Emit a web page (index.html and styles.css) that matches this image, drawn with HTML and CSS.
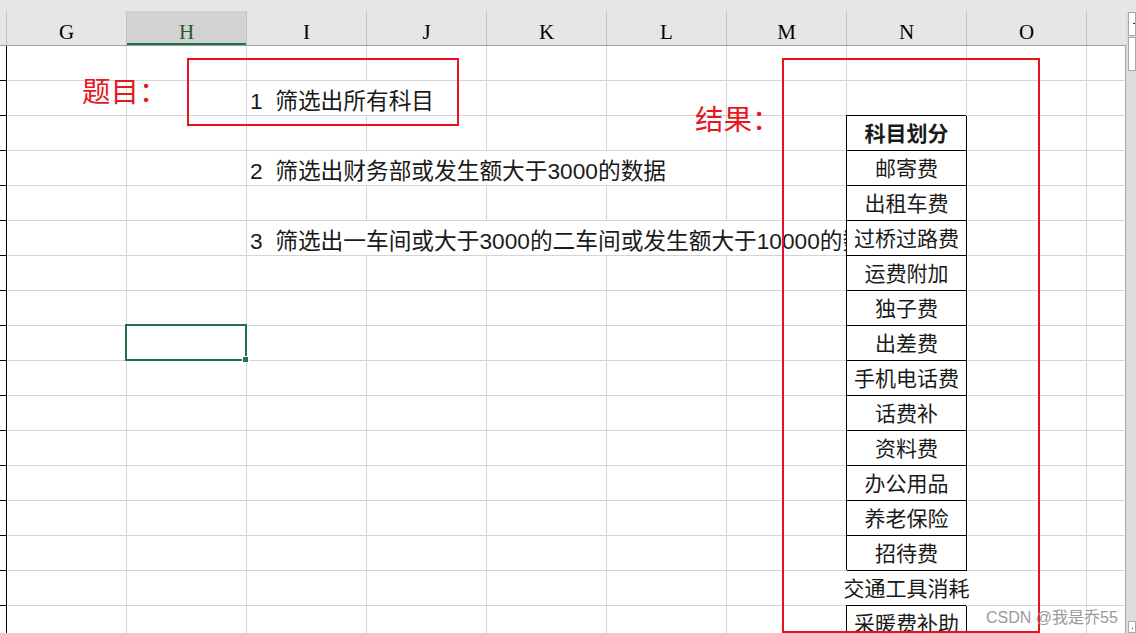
FILE: index.html
```html
<!DOCTYPE html>
<html lang="zh-CN">
<head>
<meta charset="utf-8">
<title>筛选</title>
<link rel="stylesheet" href="styles.css">
</head>
<body>
<div class="app">
  <div class="sheet">
    <div class="topbar"></div>
    <div class="colhead">
      <div class="ch corner"></div>
      <div class="ch">G</div>
      <div class="ch sel">H</div>
      <div class="ch">I</div>
      <div class="ch">J</div>
      <div class="ch">K</div>
      <div class="ch">L</div>
      <div class="ch">M</div>
      <div class="ch">N</div>
      <div class="ch">O</div>
      <div class="ch edge"></div>
    </div>
    <div class="rows">
      <div class="row"><div class="rh"></div><div class="c"></div><div class="c"></div><div class="c"></div><div class="c"></div><div class="c"></div><div class="c"></div><div class="c"></div><div class="c"></div><div class="c"></div><div class="c edge"></div></div>
      <div class="row"><div class="rh"></div><div class="c"></div><div class="c"></div><div class="c s2 txt">1  筛选出所有科目</div><div class="c"></div><div class="c"></div><div class="c"></div><div class="c"></div><div class="c"></div><div class="c edge"></div></div>
      <div class="row"><div class="rh"></div><div class="c"></div><div class="c"></div><div class="c"></div><div class="c"></div><div class="c"></div><div class="c"></div><div class="c"></div><div class="c tb th">科目划分</div><div class="c"></div><div class="c edge"></div></div>
      <div class="row"><div class="rh"></div><div class="c"></div><div class="c"></div><div class="c s4 txt">2  筛选出财务部或发生额大于3000的数据</div><div class="c"></div><div class="c tb">邮寄费</div><div class="c"></div><div class="c edge"></div></div>
      <div class="row"><div class="rh"></div><div class="c"></div><div class="c"></div><div class="c"></div><div class="c"></div><div class="c"></div><div class="c"></div><div class="c"></div><div class="c tb">出租车费</div><div class="c"></div><div class="c edge"></div></div>
      <div class="row"><div class="rh"></div><div class="c"></div><div class="c"></div><div class="c s5 txt">3  筛选出一车间或大于3000的二车间或发生额大于10000的数据</div><div class="c tb">过桥过路费</div><div class="c"></div><div class="c edge"></div></div>
      <div class="row"><div class="rh"></div><div class="c"></div><div class="c"></div><div class="c"></div><div class="c"></div><div class="c"></div><div class="c"></div><div class="c"></div><div class="c tb">运费附加</div><div class="c"></div><div class="c edge"></div></div>
      <div class="row"><div class="rh"></div><div class="c"></div><div class="c"></div><div class="c"></div><div class="c"></div><div class="c"></div><div class="c"></div><div class="c"></div><div class="c tb">独子费</div><div class="c"></div><div class="c edge"></div></div>
      <div class="row"><div class="rh"></div><div class="c"></div><div class="c active"></div><div class="c"></div><div class="c"></div><div class="c"></div><div class="c"></div><div class="c"></div><div class="c tb">出差费</div><div class="c"></div><div class="c edge"></div></div>
      <div class="row"><div class="rh"></div><div class="c"></div><div class="c"></div><div class="c"></div><div class="c"></div><div class="c"></div><div class="c"></div><div class="c"></div><div class="c tb">手机电话费</div><div class="c"></div><div class="c edge"></div></div>
      <div class="row"><div class="rh"></div><div class="c"></div><div class="c"></div><div class="c"></div><div class="c"></div><div class="c"></div><div class="c"></div><div class="c"></div><div class="c tb">话费补</div><div class="c"></div><div class="c edge"></div></div>
      <div class="row"><div class="rh"></div><div class="c"></div><div class="c"></div><div class="c"></div><div class="c"></div><div class="c"></div><div class="c"></div><div class="c"></div><div class="c tb">资料费</div><div class="c"></div><div class="c edge"></div></div>
      <div class="row"><div class="rh"></div><div class="c"></div><div class="c"></div><div class="c"></div><div class="c"></div><div class="c"></div><div class="c"></div><div class="c"></div><div class="c tb">办公用品</div><div class="c"></div><div class="c edge"></div></div>
      <div class="row"><div class="rh"></div><div class="c"></div><div class="c"></div><div class="c"></div><div class="c"></div><div class="c"></div><div class="c"></div><div class="c"></div><div class="c tb">养老保险</div><div class="c"></div><div class="c edge"></div></div>
      <div class="row"><div class="rh"></div><div class="c"></div><div class="c"></div><div class="c"></div><div class="c"></div><div class="c"></div><div class="c"></div><div class="c"></div><div class="c tb">招待费</div><div class="c"></div><div class="c edge"></div></div>
      <div class="row"><div class="rh"></div><div class="c"></div><div class="c"></div><div class="c"></div><div class="c"></div><div class="c"></div><div class="c"></div><div class="c s3 mid">交通工具消耗</div><div class="c edge"></div></div>
      <div class="row"><div class="rh"></div><div class="c"></div><div class="c"></div><div class="c"></div><div class="c"></div><div class="c"></div><div class="c"></div><div class="c"></div><div class="c tb">采暖费补助</div><div class="c"></div><div class="c edge"></div></div>
    </div>
  </div>
  <div class="vscroll">
    <div class="vs-top"></div>
    <div class="vs-btn vs-btn1"><span class="vs-tick"></span></div>
    <div class="vs-btn vs-btn2"></div>
    <div class="vs-track"></div>
    <div class="vs-btn vs-btn3"><span class="vs-dot"></span></div>
  </div>
</div>

<div class="shape frame frame-q"></div>
<div class="shape frame frame-r"></div>
<div class="shape label label-q">题目：</div>
<div class="shape label label-r">结果：</div>
<div class="watermark">CSDN @我是乔55</div>
</body>
</html>
```

FILE: styles.css
```css
* { box-sizing: border-box; }
html, body { margin: 0; padding: 0; }
body {
  width: 1136px;
  height: 633px;
  overflow: hidden;
  position: relative;
  background: #fff;
  font-family: "Liberation Sans", "Noto Sans CJK SC", sans-serif;
}
.app { display: flex; height: 633px; }
.sheet { width: 1126px; flex: none; display: flex; flex-direction: column; overflow: hidden; }
.topbar { height: 11px; background: #e6e6e6; flex: none; }

.colhead {
  display: grid;
  grid-template-columns: 7px repeat(9, 120px) 39px;
  height: 35px;
  flex: none;
  background: #e6e6e6;
  border-bottom: 1px solid #9e9e9e;
}
.ch {
  border-right: 1px solid #c2c2c2;
  display: flex;
  align-items: center;
  justify-content: center;
  font-family: "Liberation Serif", serif;
  font-size: 21px;
  line-height: 1;
  color: #000;
  padding-top: 9px;
}
.ch.sel { background: #d2d2d2; box-shadow: inset 0 -2px 0 #217346; color: #1f5a35; }
.ch.edge { border-right: none; }

.rows { display: flex; flex-direction: column; }
.row {
  display: grid;
  grid-template-columns: 7px repeat(9, 120px) 39px;
  height: 35px;
  flex: none;
}
.rh { border-right: 1px solid #000; border-bottom: 1px solid #000; }
.c {
  border-right: 1px solid #d4d4d4;
  border-bottom: 1px solid #d4d4d4;
  font-size: 21px;
  color: #1a1a1a;
  white-space: nowrap;
  overflow: hidden;
  display: flex;
  align-items: center;
  padding: 3px 0 0 3px;
}
.c.txt { font-size: 22.7px; white-space: pre; }
.c.edge { border-right-color: #a8a8a8; }
.s2 { grid-column: span 2; }
.s3 { grid-column: span 3; }
.s4 { grid-column: span 4; }
.s5 { grid-column: span 5; }
.c.tb {
  border-right-color: #000;
  border-bottom-color: #000;
  box-shadow: -1px -1px 0 #000;
  justify-content: center;
  padding: 0 0 3px 0;
}
.c.th { font-weight: 700; }
.c.mid { justify-content: center; padding: 0 0 3px 0; }

.c.active { position: relative; overflow: visible; z-index: 2; }
.c.active::before {
  content: "";
  position: absolute;
  left: -2px; top: -2px; right: -1px; bottom: -1px;
  border: 2px solid #217346;
}
.c.active::after {
  content: "";
  position: absolute;
  right: -3px; bottom: -3px;
  width: 5px; height: 5px;
  background: #217346;
  border: 1px solid #fff;
  box-sizing: content-box;
}

.vscroll { width: 10px; flex: none; display: flex; flex-direction: column; background: #dcdcdc; }
.vs-top { height: 12px; background: #e6e6e6; flex: none; }
.vs-btn { margin-left: 2px; background: #fff; border: 1px solid #a9a9a9; flex: none; position: relative; }
.vs-btn1 { height: 24px; }
.vs-btn2 { height: 34px; margin-top: 1px; }
.vs-track { flex: 1; }
.vs-btn3 { height: 12px; }
.vs-tick { position: absolute; right: 0; top: 10px; width: 2px; height: 1px; background: #333; }
.vs-dot { position: absolute; left: 3px; top: 6px; width: 1px; height: 1px; background: #333; }

.shape { position: absolute; }
.frame { border: 2px solid #e5131d; }
.frame-q { left: 187px; top: 58px; width: 272px; height: 68px; }
.frame-r { left: 782px; top: 58px; width: 258px; height: 575px; }
.label {
  font-family: "Noto Sans CJK SC", sans-serif;
  font-size: 28.5px;
  line-height: 1;
  color: #e8161f;
}
.label-q { left: 82px; top: 76px; }
.label-r { left: 695px; top: 104px; }
.watermark {
  position: absolute;
  left: 986px;
  top: 604px;
  font-family: "Liberation Sans", "Noto Sans CJK SC", sans-serif;
  font-size: 16px;
  color: #9a9a9a;
  white-space: nowrap;
}
```
